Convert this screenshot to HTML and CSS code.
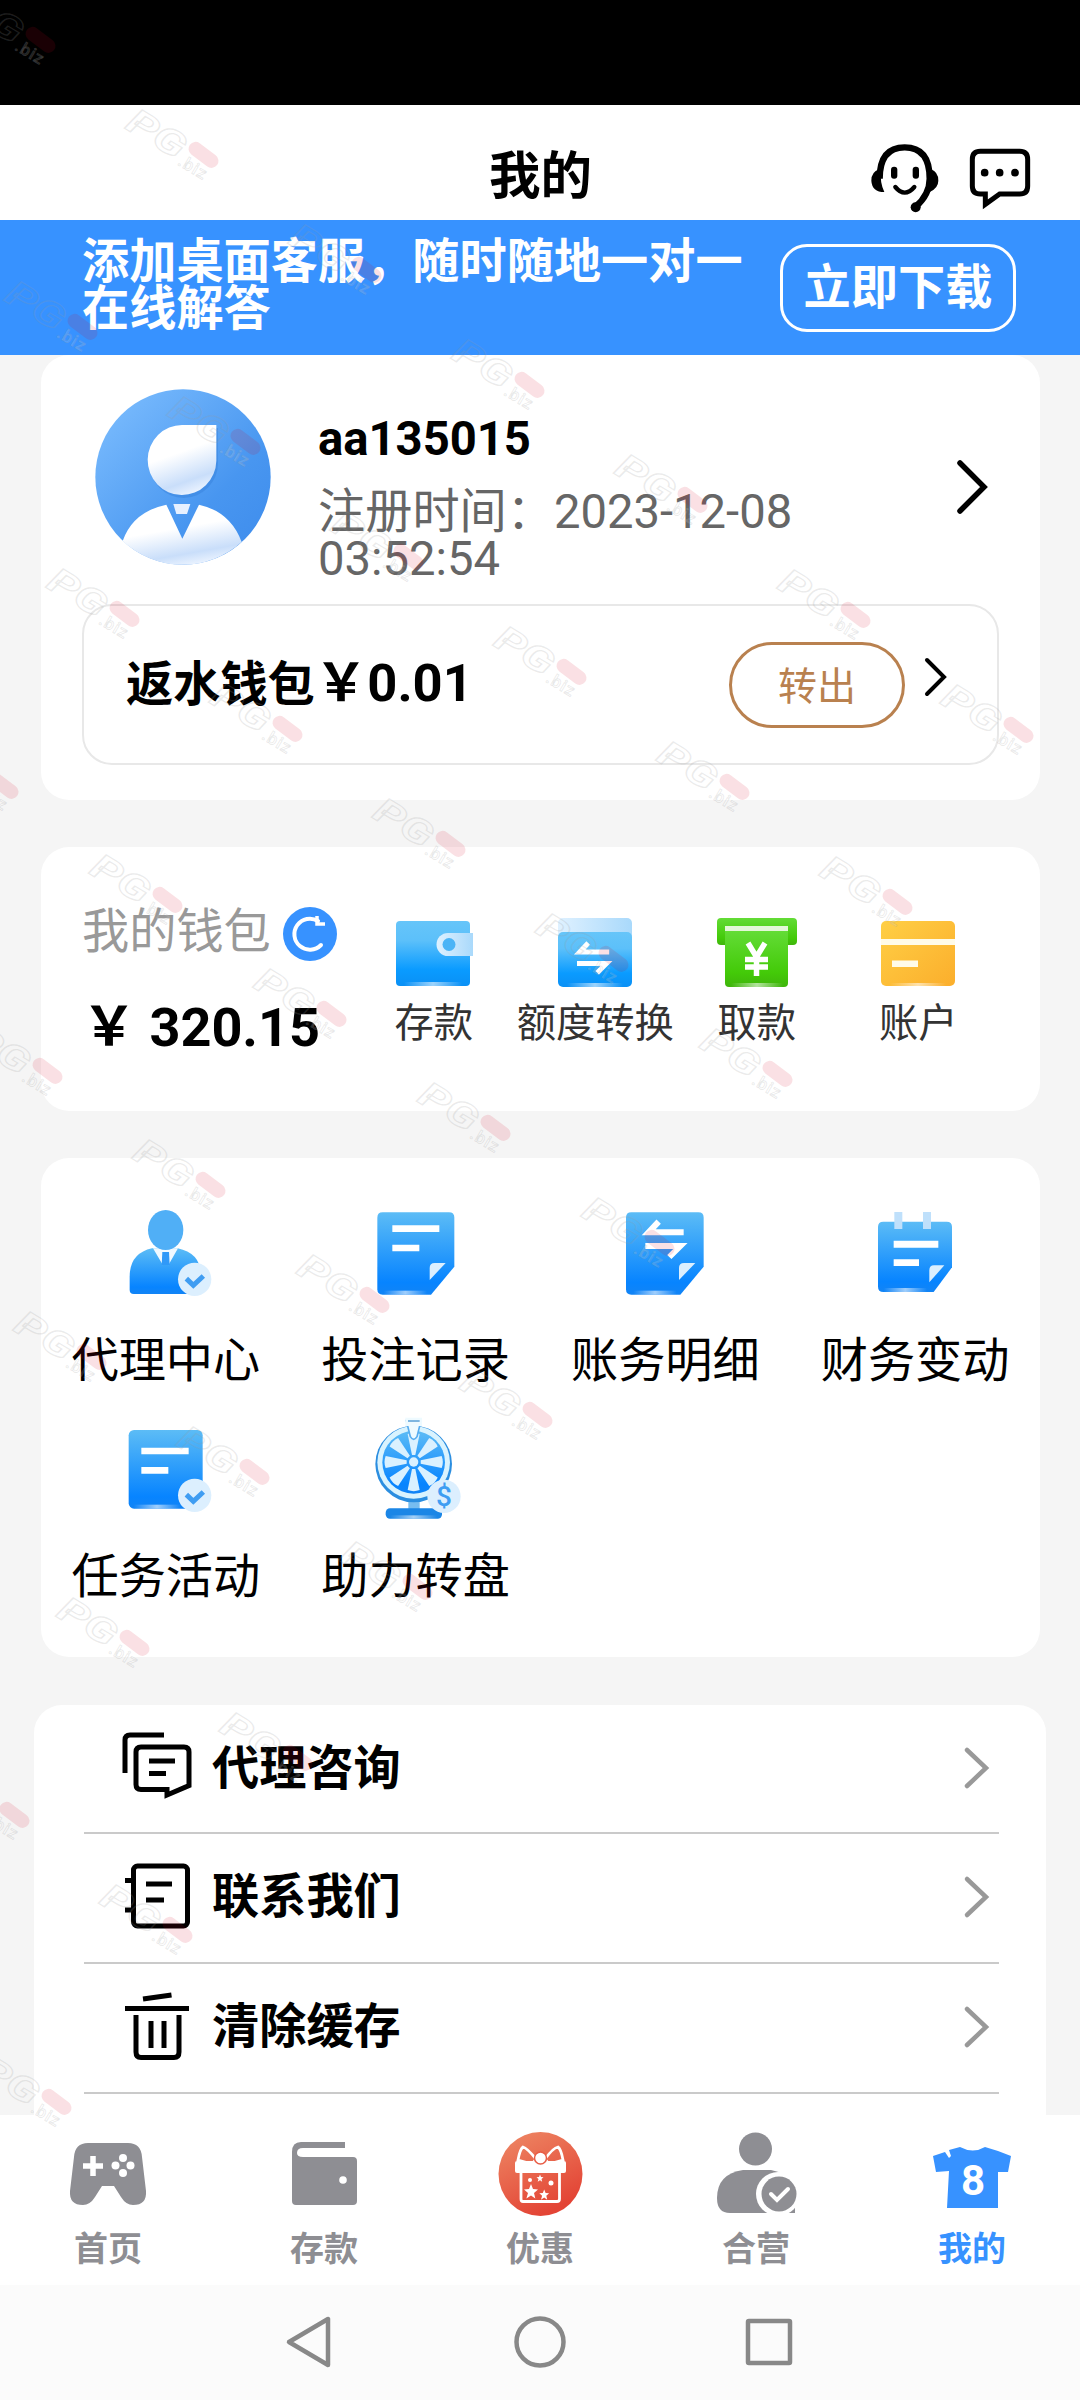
FILE: index.html
```html
<!DOCTYPE html>
<html lang="zh-CN">
<head>
<meta charset="utf-8">
<title>我的</title>
<link rel="stylesheet" href="styles.css">
</head>
<body>
<div class="screen">
  <!-- shared gradients and symbols -->
  <svg class="defs" width="0" height="0">
    <defs>
      <linearGradient id="blue" x1="0" y1="0" x2="0" y2="1"><stop offset="0" stop-color="#5cbcf6"/><stop offset=".85" stop-color="#0784ff"/><stop offset="1" stop-color="#1284f5"/></linearGradient>
      <linearGradient id="sky" x1="0" y1="0" x2="0" y2="1"><stop offset="0" stop-color="#66c5f9"/><stop offset=".3" stop-color="#5cc0fa"/><stop offset=".75" stop-color="#0a9bff"/><stop offset="1" stop-color="#0a90f5"/></linearGradient>
      <linearGradient id="pale" x1="0" y1="0" x2="1" y2="0"><stop offset="0" stop-color="#dff1ff"/><stop offset="1" stop-color="#a9d9fb"/></linearGradient>
      <linearGradient id="green" x1="0" y1="0" x2="0" y2="1"><stop offset="0" stop-color="#63dc36"/><stop offset=".75" stop-color="#43ca08"/><stop offset="1" stop-color="#3fb50c"/></linearGradient>
      <linearGradient id="gold" x1="0" y1="0" x2="1" y2="1"><stop offset="0" stop-color="#ffcf45"/><stop offset="1" stop-color="#fbae2c"/></linearGradient>
      <linearGradient id="avatar" x1="0" y1="0" x2="1" y2="1"><stop offset="0" stop-color="#80c0ff"/><stop offset=".65" stop-color="#4896f0"/><stop offset="1" stop-color="#3d8bec"/></linearGradient>
      <linearGradient id="skin" x1=".3" y1="0" x2=".65" y2="1"><stop offset=".4" stop-color="#fff"/><stop offset=".8" stop-color="#c9defa"/><stop offset="1" stop-color="#eef5ff"/></linearGradient>
      <linearGradient id="shine" x1="0" y1="0" x2="1" y2="0"><stop offset="0" stop-color="#fff" stop-opacity="0"/><stop offset=".5" stop-color="#fff" stop-opacity=".6"/><stop offset="1" stop-color="#fff" stop-opacity="0"/></linearGradient>
      <linearGradient id="red" x1="0" y1="0" x2=".5" y2="1"><stop offset="0" stop-color="#ee8a66"/><stop offset="1" stop-color="#e34435"/></linearGradient>
      <g id="badge"><circle r="50" fill="#dceffe"/><path d="M-25-2-4 18 26-10" fill="none" stroke="#3f9df2" stroke-width="15"/></g>
      <g id="swap" fill="none" stroke="#fff" stroke-width="18"><path d="M115 0H10L40-32"/><path d="M0 41H105L72 74"/></g>
      <g id="mark" transform="rotate(31)">
        <text class="mark-name" x="0" y="0" textLength="62" lengthAdjust="spacingAndGlyphs">PG</text>
        <text class="mark-tld" x="64" y="4">.biz</text>
        <rect class="mark-pill" x="65" y="-25" width="34" height="14" rx="7" transform="rotate(6 81 -18)"/>
      </g>
    </defs>
  </svg>

  <div class="status"></div>

  <header class="header">
    <h1 class="title">我的</h1>
    <div class="header-icons">
      <svg width="68" height="69" viewBox="302 74 204 207">
        <path d="M328 178Q328 84 403 84T478 178Q478 225 436 262" fill="none" stroke="#000" stroke-width="19"/>
        <path d="M326 150Q303 158 303 184 305 218 342 218 328 190 332 150ZM482 150Q504 158 504 184 504 206 478 218 486 190 476 150Z"/>
        <rect x="362" y="142" width="19" height="36" rx="9"/><rect x="427" y="142" width="19" height="36" rx="9"/>
        <path d="M375 203Q403 237 432 203" fill="none" stroke="#000" stroke-width="13" stroke-linecap="round"/>
        <circle cx="436" cy="264" r="15"/>
      </svg>
      <svg width="62" height="62" viewBox="596 85 186 186">
        <path d="M630 95H748Q772 95 772 119V199Q772 223 748 223H688L645 254V223H630Q606 223 606 199V119Q606 95 630 95Z" fill="none" stroke="#000" stroke-width="15"/>
        <circle cx="643" cy="159" r="11.5"/><circle cx="688" cy="159" r="11.5"/><circle cx="734" cy="159" r="11.5"/>
      </svg>
    </div>
  </header>

  <section class="banner">
    <p class="banner-text">添加桌面客服，随时随地一对一在线解答</p>
    <button class="download">立即下载</button>
  </section>

  <main class="content">
    <section class="card profile">
      <div class="user">
        <svg class="avatar" width="176" height="176" viewBox="164 117 528 528">
          <circle cx="428" cy="381" r="263" fill="url(#avatar)"/>
          <path d="M247 573Q278 485 378 464L426 566 476 464Q570 485 604 576A263 263 0 0 1 247 573Z" fill="url(#skin)"/>
          <path d="M399 462H450L440 492H408Z" fill="#e6f0ff"/>
          <path d="M426 228H528V332A103 105 0 1 1 426 228Z" fill="#2f78d4" opacity=".35" transform="translate(5 6)"/>
          <path d="M426 225H528V332A103 105 0 1 1 426 225Z" fill="url(#skin)"/>
        </svg>
        <div class="user-info">
          <div class="user-name">aa135015</div>
          <div class="user-date">注册时间：2023-12-08 03:52:54</div>
        </div>
        <svg class="chevron-big" width="34" height="58" viewBox="0 0 34 58"><path d="M4 5 28 29 4 53" fill="none" stroke="#000" stroke-width="5.5" stroke-linecap="round"/></svg>
      </div>
      <div class="rebate">
        <div class="rebate-label">返水钱包<span class="amount">￥0.01</span></div>
        <button class="transfer">转出</button>
        <svg width="24" height="40" viewBox="0 0 24 40"><path d="M3 3 20 20 3 37" fill="none" stroke="#000" stroke-width="4" stroke-linecap="round"/></svg>
      </div>
    </section>

    <section class="card wallet">
      <div class="balance">
        <div class="balance-label"><span>我的钱包</span>
          <svg width="54" height="54" viewBox="-27 -27 54 54"><circle r="27" fill="#3792ff"/><path d="M8-13A15.500 15.500 0 1 0 11 11" fill="none" stroke="#fff" stroke-width="4" stroke-linecap="round"/><path d="M7-18V-10H15" fill="none" stroke="#fff" stroke-width="3.500"/></svg>
        </div>
        <div class="amount">￥ 320.15</div>
      </div>
      <div class="wallet-menu">
        <div class="wallet-item">
          <svg width="80" height="72" viewBox="0 0 80 72"><rect x="2" y="4" width="74" height="65" rx="4" fill="url(#sky)"/><rect x="10" y="65" width="58" height="4" fill="url(#shine)"/><path d="M79 16V39H54A11.5 11.5 0 0 1 54 16Z" fill="url(#pale)"/><circle cx="55" cy="27.5" r="6.5" fill="#4bb4f6"/></svg>
          <span>存款</span>
        </div>
        <div class="wallet-item">
          <svg width="80" height="72" viewBox="0 0 80 72"><rect x="3" y="1" width="74" height="40" rx="5" fill="url(#pale)"/><rect x="3" y="15" width="74" height="55" rx="5" fill="url(#sky)"/><rect x="12" y="66" width="56" height="4" fill="url(#shine)"/><use href="#swap" transform="translate(22 35) scale(.28)"/></svg>
          <span>额度转换</span>
        </div>
        <div class="wallet-item">
          <svg width="80" height="72" viewBox="0 0 80 72"><rect width="80" height="27" y="1" rx="4" fill="url(#green)"/><rect x="8" y="9" width="63" height="14" fill="#e3f7d8"/><path d="M8 14H71V66Q71 70 67 70H12Q8 70 8 66Z" fill="url(#green)"/><rect x="14" y="66" width="52" height="4" fill="url(#shine)"/><path d="M31 26 39.500 40 48 26M39.500 38V59M28 42.500H51M28 50H51" fill="none" stroke="#fff" stroke-width="5.500"/></svg>
          <span>取款</span>
        </div>
        <div class="wallet-item">
          <svg width="80" height="72" viewBox="0 0 80 72"><rect x="3" y="4" width="74" height="65" rx="5" fill="url(#gold)"/><path d="M3 22H77V28H3ZM14 43.500H40V50H14Z" fill="#fffbe8"/><rect x="12" y="66" width="56" height="3" fill="url(#shine)"/></svg>
          <span>账户</span>
        </div>
      </div>
    </section>

    <section class="card services">
      <div class="service">
        <svg width="100" height="110" viewBox="227 141 300 330">
          <path d="M268 420V380Q268 310 335 295H412Q480 310 480 370V432H280Q268 432 268 420Z" fill="url(#blue)"/>
          <path d="M338 295 368 346 376 318 384 346 413 295Z" fill="#f1f9ff"/><path d="M366 306H386L388 345H364Z" fill="#3099f8"/>
          <ellipse cx="376" cy="240" rx="53" ry="60" fill="#50aff6"/>
          <use href="#badge" x="463" y="388"/>
        </svg>
        <span>代理中心</span>
      </div>
      <div class="service">
        <svg width="100" height="110" viewBox="977 141 300 330">
          <path d="M1027 187H1226Q1242 187 1242 203V350L1172 434H1027Q1011 434 1011 418V203Q1011 187 1027 187Z" fill="url(#blue)"/>
          <path d="M1056 226H1197V246H1056ZM1056 284H1137V304H1056Z" fill="#fff"/>
          <path d="M1168 390V354Q1168 339 1183 339H1216Z" fill="#dceffe"/><rect x="1030" y="422" width="130" height="12" fill="url(#shine)"/>
        </svg>
        <span>投注记录</span>
      </div>
      <div class="service">
        <svg width="100" height="110" viewBox="225 141 300 330">
          <path d="M274 187H475Q491 187 491 203V350L421 434H274Q258 434 258 418V203Q258 187 274 187Z" fill="url(#blue)"/>
          <use href="#swap" transform="translate(316 247)"/>
          <path d="M417 390V354Q417 339 432 339H466Z" fill="#dceffe"/><rect x="280" y="422" width="130" height="12" fill="url(#shine)"/>
        </svg>
        <span>账务明细</span>
      </div>
      <div class="service">
        <svg width="100" height="110" viewBox="974 141 300 330">
          <path d="M1029 215H1219Q1235 215 1235 231V352L1180 426H1029Q1013 426 1013 410V231Q1013 215 1029 215Z" fill="url(#blue)"/>
          <path d="M1062 186H1086V237H1062ZM1148 186H1172V237H1148Z" fill="#bfe0fb"/>
          <path d="M1060 272H1194V293H1060ZM1060 328H1136V348H1060Z" fill="#fff"/>
          <path d="M1167 397V360Q1167 346 1181 346H1212Z" fill="#dceffe"/><rect x="1030" y="414" width="130" height="12" fill="url(#shine)"/>
        </svg>
        <span>财务变动</span>
      </div>
      <div class="service">
        <svg width="100" height="110" viewBox="227 789 300 330">
          <rect x="265" y="840" width="222" height="236" rx="16" fill="url(#blue)"/><rect x="280" y="1064" width="140" height="12" fill="url(#shine)"/>
          <path d="M303 893H445V913H303ZM303 951H384V971H303Z" fill="#fff"/>
          <use href="#badge" x="463" y="1036"/>
        </svg>
        <span>任务活动</span>
      </div>
      <div class="service">
        <svg width="100" height="110" viewBox="977 789 300 330">
          <path d="M1104 1040H1138V1090H1104Z" fill="#77bdf0"/><rect x="1036" y="1075" width="169" height="31" rx="13" fill="#1b86e6"/><rect x="1050" y="1096" width="140" height="10" fill="url(#shine)"/>
          <circle cx="1120" cy="942" r="115" fill="#2b8ee0"/><circle cx="1120" cy="937" r="109" fill="#d9f3fe"/><circle cx="1120" cy="937" r="94" fill="url(#blue)"/>
          <g fill="#daf1ff"><path id="slice" d="M1115 915 1102 852Q1120 845 1138 852L1125 915Z"/><use href="#slice" transform="rotate(45 1120 936)"/><use href="#slice" transform="rotate(90 1120 936)"/><use href="#slice" transform="rotate(135 1120 936)"/><use href="#slice" transform="rotate(180 1120 936)"/><use href="#slice" transform="rotate(225 1120 936)"/><use href="#slice" transform="rotate(270 1120 936)"/><use href="#slice" transform="rotate(315 1120 936)"/><circle cx="1120" cy="936" r="14"/></g>
          <path d="M1098 812H1142L1130 860Q1120 876 1110 860Z" fill="#eefaff" stroke="#58adf0" stroke-width="5"/><path d="M1095 803H1145V828H1095Z" fill="#eefaff"/><path d="M1103 813H1138" stroke="#4794d0" stroke-width="4"/>
          <circle cx="1211" cy="1039" r="50" fill="#dceffe"/><text class="dollar" x="1211" y="1069">$</text>
        </svg>
        <span>助力转盘</span>
      </div>
    </section>

    <section class="list">
      <div class="row">
        <svg width="80" height="80" viewBox="0 0 80 80"><g fill="none" stroke="#000" stroke-width="5"><path d="M7 45V12Q7 7 12 7H46"/><path d="M23 19H66Q71 19 71 24V57.500L49 67V61.500H23Q18 61.500 18 56.500V24Q18 19 23 19Z"/><path d="M31 33H57M31 45.500H48"/></g></svg>
        <span>代理咨询</span>
        <svg width="28" height="44" viewBox="0 0 28 44"><path class="chevron" d="M4 4 23 22 4 40"/></svg>
      </div>
      <div class="row">
        <svg width="80" height="80" viewBox="0 0 80 80"><g fill="none" stroke="#000" stroke-width="5"><rect x="15.500" y="9" width="54" height="60" rx="4"/><path d="M28 27H54M28 43H46M7 23.500H15M7 53H15"/></g></svg>
        <span>联系我们</span>
        <svg width="28" height="44" viewBox="0 0 28 44"><path class="chevron" d="M4 4 23 22 4 40"/></svg>
      </div>
      <div class="row">
        <svg width="80" height="80" viewBox="0 0 80 80"><g fill="none" stroke="#000" stroke-width="5"><path d="M7 21.500H71M25 12 53.500 8M18 28V65Q18 70.500 23 70.500H56Q61 70.500 61 65V28M33 34V61M46 34V61"/></g></svg>
        <span>清除缓存</span>
        <svg width="28" height="44" viewBox="0 0 28 44"><path class="chevron" d="M4 4 23 22 4 40"/></svg>
      </div>
    </section>
  </main>

  <nav class="tabs">
    <div class="tab">
      <svg width="90" height="90" viewBox="0 0 90 90"><path d="M25 14H65Q78 14 79 28L83 62Q84 76 70 76 63 76 58 68L51 57H39L32 68Q27 76 20 76 6 76 7 62L11 28Q12 14 25 14Z" fill="#8e8e93"/><path d="M30 27V47M20 37H40" stroke="#fff" stroke-width="5.500"/><g fill="#fff"><circle cx="60" cy="29" r="4"/><circle cx="60" cy="44" r="4"/><circle cx="52.500" cy="36.500" r="4"/><circle cx="67.500" cy="36.500" r="4"/></g></svg>
      <span>首页</span>
    </div>
    <div class="tab">
      <svg width="90" height="90" viewBox="0 0 90 90"><path d="M13 23Q13 13 22 13H66V19H24Q18 19 18 24 18 28 24 28H74Q78 28 78 32V72Q78 76 74 76H17Q13 76 13 72Z" fill="#8e8e93"/><circle cx="64" cy="51" r="3.800" fill="#fff"/></svg>
      <span>存款</span>
    </div>
    <div class="tab">
      <svg width="90" height="90" viewBox="0 0 90 90"><circle cx="45.500" cy="45" r="42" fill="url(#red)"/><g fill="none" stroke="#fff" stroke-width="2.800"><path d="M26 44V70Q26 72.500 28 72.500H62Q64.500 72.500 64.500 70V44"/><path d="M41 30Q32 19 28 18 25 20 23 31L37 35ZM50 30Q58 19 63 18 66 20 68 31L54 35Z"/></g><rect x="20" y="32" width="51" height="12" rx="2" fill="#fff"/><circle cx="45.500" cy="29" r="6" fill="#fff" stroke="#e85c45" stroke-width="1.500"/><g fill="#fff"><path id="star" d="m36 55 2 5 5 .5-4 3.500 1.300 5.500-4.300-3-4.600 3L33 64l-4-3.500 5-.5Z"/><use href="#star" transform="translate(24 22) scale(.7)"/><use href="#star" transform="translate(27 18) scale(.5)"/><circle cx="35" cy="51" r="2"/><circle cx="56" cy="54" r="2.500"/></g></svg>
      <span>优惠</span>
    </div>
    <div class="tab">
      <svg width="90" height="90" viewBox="0 0 90 90"><g fill="#8e8e93"><circle cx="44.500" cy="20" r="16.500"/><path d="M32 41H60Q85 45 84 84H19Q6 84 6 69 6 45 32 41Z"/></g><circle cx="67" cy="65" r="22" fill="#fff"/><path d="M62 84H90V92H62Z" fill="#fff"/><circle cx="68" cy="65" r="17.500" fill="#8e8e93"/><path d="M60 65 66 71 77 60" fill="none" stroke="#fff" stroke-width="4" stroke-linecap="round"/></svg>
      <span>合营</span>
    </div>
    <div class="tab active">
      <svg width="90" height="90" viewBox="0 0 90 90"><path d="M6 27 18 23 22 29 24 27 22 21 33 18Q46 25 58 18L71 22 84 27 81 43H71V79H20L22 42 9 43Z" fill="#3792ff"/><text class="shirt-no" x="46" y="66">8</text></svg>
      <span>我的</span>
    </div>
  </nav>

  <footer class="sysnav">
    <svg width="540" height="60" viewBox="270 2313 540 60"><g fill="none" stroke="#888" stroke-width="4.500" stroke-linejoin="round"><path d="M328 2319V2365L289 2342Z"/><circle cx="540" cy="2342" r="23.500"/><rect x="748" y="2321" width="42" height="42" rx="1"/></g></svg>
  </footer>

  <svg class="marks" width="1080" height="2400" viewBox="0 0 1080 2400">
    <use href="#mark" transform="translate(-39 13)"/>
    <use href="#mark" transform="translate(124 128)"/>
    <use href="#mark" transform="translate(287 243)"/>
    <use href="#mark" transform="translate(450 358)"/>
    <use href="#mark" transform="translate(613 473)"/>
    <use href="#mark" transform="translate(776 588)"/>
    <use href="#mark" transform="translate(939 703)"/>
    <use href="#mark" transform="translate(3 300)"/>
    <use href="#mark" transform="translate(166 415)"/>
    <use href="#mark" transform="translate(329 530)"/>
    <use href="#mark" transform="translate(492 645)"/>
    <use href="#mark" transform="translate(655 760)"/>
    <use href="#mark" transform="translate(818 875)"/>
    <use href="#mark" transform="translate(45 587)"/>
    <use href="#mark" transform="translate(208 702)"/>
    <use href="#mark" transform="translate(371 817)"/>
    <use href="#mark" transform="translate(534 932)"/>
    <use href="#mark" transform="translate(698 1047)"/>
    <use href="#mark" transform="translate(-76 759)"/>
    <use href="#mark" transform="translate(88 873)"/>
    <use href="#mark" transform="translate(252 987)"/>
    <use href="#mark" transform="translate(416 1101)"/>
    <use href="#mark" transform="translate(580 1216)"/>
    <use href="#mark" transform="translate(-32 1044)"/>
    <use href="#mark" transform="translate(131 1158)"/>
    <use href="#mark" transform="translate(295 1273)"/>
    <use href="#mark" transform="translate(458 1388)"/>
    <use href="#mark" transform="translate(12 1330)"/>
    <use href="#mark" transform="translate(175 1445)"/>
    <use href="#mark" transform="translate(338 1560)"/>
    <use href="#mark" transform="translate(55 1616)"/>
    <use href="#mark" transform="translate(218 1731)"/>
    <use href="#mark" transform="translate(-65 1788)"/>
    <use href="#mark" transform="translate(98 1903)"/>
    <use href="#mark" transform="translate(-23 2075)"/>
  </svg>
</div>
</body>
</html>
```
FILE: styles.css
```css
* { box-sizing: border-box; }
body, h1, p { margin: 0; }
body {
  font-family: Roboto, "Noto Sans CJK SC", sans-serif;
  font-size: 47.2px;
  color: #000;
}
button {
  font: inherit;
  background: none;
  padding: 0;
}
svg { display: block; flex: none; }
.defs { position: absolute; }
.screen {
  position: relative;
  width: 1080px;
  height: 2400px;
  display: flex;
  flex-direction: column;
  background: #f5f5f5;
  overflow: hidden;
}
.status { height: 105px; background: #000; }

.header {
  height: 115px;
  background: #fff;
  display: grid;
  grid-template-columns: 1fr auto 1fr;
  align-items: center;
  padding: 32px 49px 0 50px;
}
.title {
  grid-column: 2;
  font-size: 51.5px;
  line-height: 60px;
  margin-top: -4px;
  font-weight: 700;
}
.header-icons {
  display: flex;
  justify-content: flex-end;
  align-items: center;
  gap: 30px;
}

.banner {
  height: 135px;
  background: #3792ff;
  color: #fff;
  display: flex;
  justify-content: space-between;
  align-items: flex-start;
  padding: 19px 64px 0 82px;
  font-weight: 700;
}
.banner-text { width: 670px; line-height: 47px; }
.download {
  margin-top: 5px;
  width: 236px;
  height: 88px;
  padding-bottom: 9px;
  border: 3px solid #fff;
  border-radius: 27px;
  color: #fff;
}

.content {
  height: 1760px;
  overflow: hidden;
  padding: 0 34px;
}
.card {
  margin: 0 6px 47px 7px;
  background: #fff;
  border-radius: 28px;
}
.profile { height: 445px; padding: 34px 41px 0; }
.user {
  height: 215px;
  display: flex;
  align-items: flex-start;
  padding: 0 9px 0 13px;
}
.user-info { margin: 25px 0 0 47px; width: 500px; flex: none; }
.user-name { font-weight: 700; line-height: 50px; }
.user-date { margin-top: 25px; line-height: 47px; color: #666; }
.chevron-big { margin: 69px 0 0 auto; }
.rebate {
  height: 161px;
  border: 2px solid #e8e8e8;
  border-radius: 30px;
  display: flex;
  align-items: center;
  padding: 0 49px 14px 42px;
}
.rebate-label { font-weight: 700; flex: 1; line-height: 60px; padding-top: 13px; }
.amount { font-size: 52.5px; font-weight: 700; line-height: 60px; }
.rebate svg { margin-top: -2px; }
.transfer {
  width: 176px;
  height: 86px;
  margin: 14px 19px 0 0;
  padding-bottom: 3px;
  border: 3px solid #b9814f;
  border-radius: 43px;
  color: #b9814f;
  font-size: 39px;
}

.wallet { height: 264px; display: flex; padding: 0 41px; }
.balance { width: 271px; padding-top: 57px; }
.balance-label {
  display: flex;
  align-items: center;
  gap: 12px;
  height: 60px;
  color: #999;
}
.balance-label span { margin-top: -14px; }
.balance .amount { margin-top: 34px; white-space: pre; font-size: 54px; }
.wallet-menu {
  flex: 1;
  display: grid;
  grid-template-columns: repeat(4, 161.5px);
  padding-top: 70px;
}
.wallet-item {
  display: flex;
  flex-direction: column;
  align-items: center;
  gap: 12px;
  font-size: 39.3px;
  line-height: 46px;
  color: #333;
}

.services {
  height: 499px;
  padding-top: 39px;
  display: grid;
  grid-template-columns: repeat(4, 1fr);
  grid-auto-rows: 216px;
}
.service {
  display: flex;
  flex-direction: column;
  align-items: center;
  gap: 24px;
  line-height: 60px;
}

.list {
  margin-top: 48px;
  height: 500px;
  background: #fff;
  border-radius: 28px;
  padding: 0 47px 0 50px;
}
.row {
  height: 130px;
  border-bottom: 2px solid #cacaca;
  display: flex;
  align-items: center;
  padding: 0 8px 3px 34px;
  font-weight: 700;
}
.row:first-child { height: 129px; padding-bottom: 1px; }
.row span { flex: 1; margin: -8px 0 0 14px; }
.chevron { fill: none; stroke: #999; stroke-width: 4.5; stroke-linecap: round; }

.tabs {
  height: 170px;
  background: #fff;
  display: grid;
  grid-template-columns: repeat(5, 1fr);
}
.tab {
  display: flex;
  flex-direction: column;
  align-items: center;
  gap: 9px;
  padding-top: 14px;
  font-size: 34px;
  line-height: 42px;
  font-weight: 700;
  color: #8e8e93;
}
.tab.active { color: #3792ff; }

.sysnav {
  height: 115px;
  background: #fbfbfb;
  display: flex;
  justify-content: center;
  align-items: center;
}

.marks { position: absolute; left: 0; top: 0; pointer-events: none; }
.mark-name {
  font: italic 700 35px Roboto, sans-serif;
  fill: none;
  stroke: #999;
  stroke-opacity: .2;
  stroke-width: 1.2;
}
.mark-tld {
  font: 500 17px Roboto, sans-serif;
  letter-spacing: 1px;
  fill: #fff;
  fill-opacity: .12;
  stroke: #999;
  stroke-opacity: .22;
  stroke-width: .8;
}
.mark-pill { fill: #d8001f; fill-opacity: .12; }
.dollar { font: 500 84px Roboto, sans-serif; fill: #3f9df2; text-anchor: middle; }
.shirt-no { font: 700 42px Roboto, sans-serif; fill: #fff; text-anchor: middle; }
```
